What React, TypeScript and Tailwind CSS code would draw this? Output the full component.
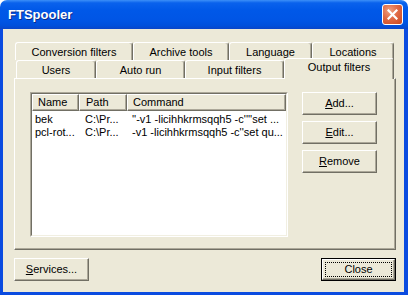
import type { ReactNode } from "react";

const raised =
  "border border-t-white border-l-white border-r-[#716f64] border-b-[#716f64] shadow-[inset_-1px_-1px_0_#aca899]";

function Button({
  children,
  isDefault = false,
}: {
  children: ReactNode;
  isDefault?: boolean;
}) {
  if (isDefault) {
    return (
      <div className="w-[75px] h-[23px] border border-black">
        <div className={`h-full ${raised} p-[2px]`}>
          <div className="h-full border border-dotted border-black flex items-center justify-center">
            {children}
          </div>
        </div>
      </div>
    );
  }
  return (
    <div
      className={`w-[75px] h-[23px] ${raised} flex items-center justify-center`}
    >
      {children}
    </div>
  );
}

function Tab({
  label,
  w,
  selected = false,
}: {
  label: string;
  w: string;
  selected?: boolean;
}) {
  return (
    <div
      className={`${w} ${
        selected
          ? "h-[21px] -mb-[1px] relative z-10 pb-[4px]"
          : "h-[18px] pt-[1px]"
      } shrink-0 bg-[#ece9d8] rounded-t-[3px] border-l border-t border-r border-l-white border-t-white border-r-[#716f64] shadow-[inset_-1px_0_0_#aca899] flex items-center justify-center`}
    >
      {label}
    </div>
  );
}

const rows = [
  {
    name: "bek",
    path: "C:\\Pr...",
    cmd: "''-v1 -licihhkrmsqqh5 -c''''set ...",
  },
  {
    name: "pcl-rot...",
    path: "C:\\Pr...",
    cmd: "-v1 -licihhkrmsqqh5 -c''set qu...",
  },
];

const App = () => {
  return (
    <div className="w-[408px] h-[295px] font-['Liberation_Sans',Arial,sans-serif] text-[11px] text-black flex flex-col overflow-hidden">
      {/* title bar */}
      <div className="h-[29px] shrink-0 rounded-t-[7px] bg-[linear-gradient(to_bottom,#3c8ff8_0%,#0a62ec_10%,#0058e8_35%,#0055e5_70%,#0050dc_88%,#0a45c8_100%)] flex items-center pl-[8px] pr-[5px]">
        <span className="text-white font-bold text-[13px] [text-shadow:1px_1px_0_#0a2c8a] flex-1">
          FTSpooler
        </span>
        <div className="w-[21px] h-[21px] rounded-[3px] border border-white bg-[radial-gradient(circle_at_35%_30%,#f0a080_0%,#e06a45_45%,#c9461e_100%)] flex items-center justify-center">
          <svg width="11" height="11" viewBox="0 0 11 11">
            <path
              d="M1.5 1.5 L9.5 9.5 M9.5 1.5 L1.5 9.5"
              stroke="white"
              strokeWidth="2.2"
              strokeLinecap="square"
            />
          </svg>
        </div>
      </div>

      {/* body */}
      <div className="flex-1 bg-[#ece9d8] border-l-[3px] border-r-[4px] border-b-[3px] border-[#0a4be0] flex flex-col pl-[11px] pr-[8px] pt-[13px]">
        {/* tab rows */}
        <div className="flex h-[18px] pl-[1px]">
          <Tab label="Conversion filters" w="w-[118px]" />
          <Tab label="Archive tools" w="w-[96px]" />
          <Tab label="Language" w="w-[83px]" />
          <Tab label="Locations" w="w-[82px]" />
        </div>
        <div className="flex h-[18px] items-end pl-[2px]">
          <Tab label="Users" w="w-[80px]" />
          <Tab label="Auto run" w="w-[89px]" />
          <Tab label="Input filters" w="w-[99px]" />
          <Tab label="Output filters" w="w-[110px]" selected />
        </div>

        {/* panel */}
        <div className="h-[172px] border border-t-white border-l-white border-r-[#716f64] border-b-[#716f64] shadow-[inset_-1px_-1px_0_#aca899] flex pl-[15px] pt-[13px] gap-[14px]">
          <div className="w-[258px] h-[145px] bg-white border border-t-[#aca899] border-l-[#aca899] border-r-white border-b-white">
            <div className="h-full border border-t-[#716f64] border-l-[#716f64] border-r-[#f1efe2] border-b-[#f1efe2] flex flex-col">
              <div className="flex h-[17px] shrink-0 bg-[#ece9d8]">
                <div className={`w-[47px] ${raised} pl-[5px] flex items-center`}>
                  Name
                </div>
                <div className={`w-[48px] ${raised} pl-[6px] flex items-center`}>
                  Path
                </div>
                <div className={`flex-1 ${raised} pl-[5px] flex items-center`}>
                  Command
                </div>
              </div>
              <div className="pt-[2px]">
                {rows.map((r) => (
                  <div key={r.name} className="flex h-[13px] items-center whitespace-nowrap">
                    <div className="w-[47px] pl-[3px]">{r.name}</div>
                    <div className="w-[48px] pl-[6px]">{r.path}</div>
                    <div className="flex-1 pl-[5px] overflow-hidden">{r.cmd}</div>
                  </div>
                ))}
              </div>
            </div>
          </div>
          <div className="flex flex-col gap-[6px]">
            <Button>
              <span className="underline">A</span>dd...
            </Button>
            <Button>
              <span className="underline">E</span>dit...
            </Button>
            <Button>
              <span className="underline">R</span>emove
            </Button>
          </div>
        </div>

        {/* bottom buttons */}
        <div className="flex justify-between mt-[8px]">
          <Button>
            <span className="underline">S</span>ervices...
          </Button>
          <Button isDefault>Close</Button>
        </div>
      </div>
    </div>
  );
};

export default App;
